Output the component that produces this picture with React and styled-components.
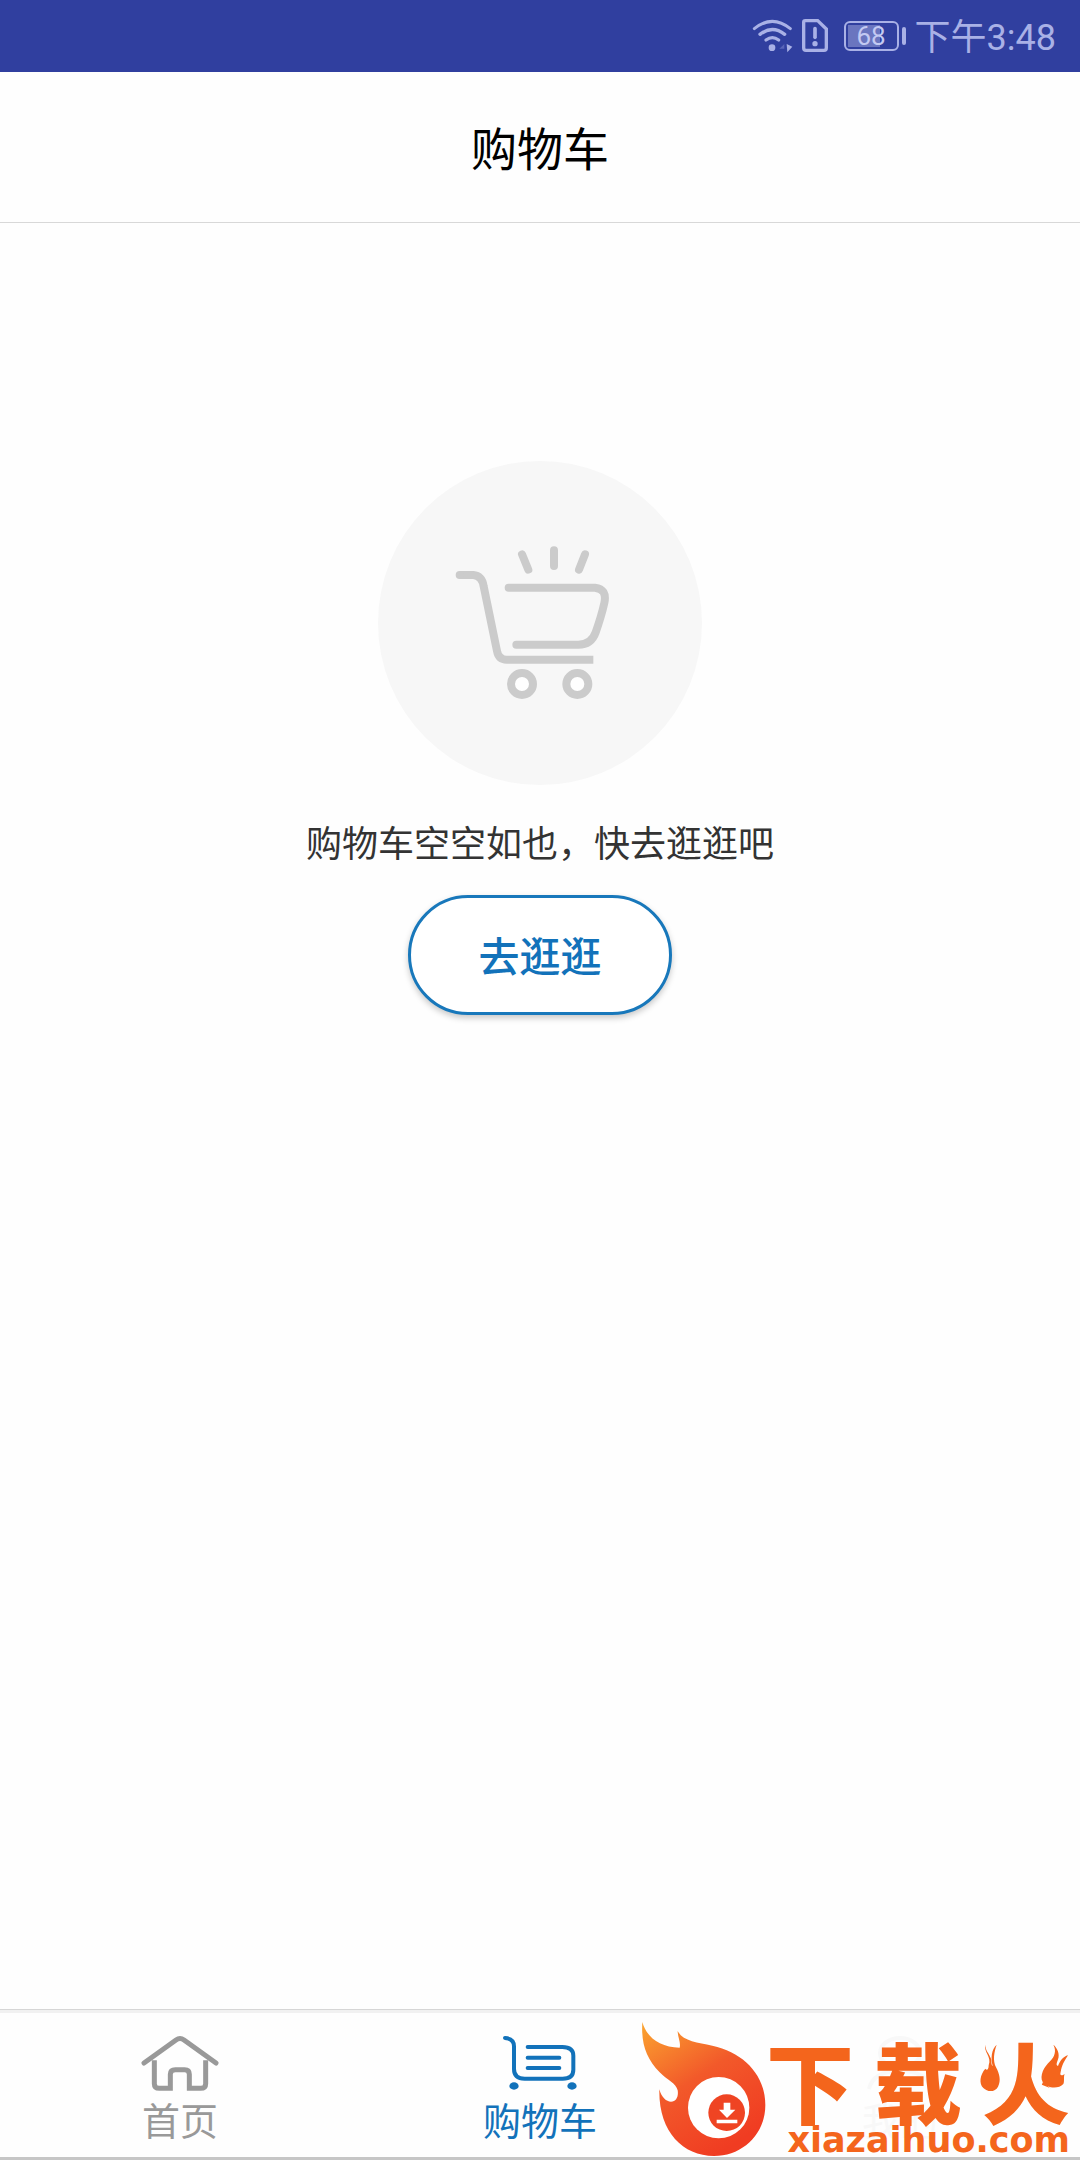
import React, {useState} from "react";
import styled, {createGlobalStyle} from "styled-components";

const GlobalStyle = createGlobalStyle`
  * {
    box-sizing: border-box;
  }
  body {
    margin: 0;
    background: #fefefe;
    font-family: Roboto, "Noto Sans CJK SC", sans-serif;
  }
`;

const Screen = styled.div`
  min-height: 100vh;
  display: flex;
  flex-direction: column;
`;

const StatusBar = styled.div`
  height: 72px;
  padding: 0 24px;
  display: flex;
  align-items: center;
  justify-content: flex-end;
  background: #303f9f;
  color: #a9b1e6;
`;

const StatusIcons = styled.svg`
  width: 92px;
  height: 40px;
`;

const Battery = styled.div`
  position: relative;
  width: 55px;
  height: 30px;
  margin-right: 16px;
  border: 2px solid #a9b1e6;
  border-radius: 6px;
  color: #c3c9f2;
  font-size: 26px;
  line-height: 26px;
  text-align: center;
  background: linear-gradient(#6a75bf, #6a75bf) 2px 2px / 32px 22px no-repeat;

  &::after {
    content: "";
    position: absolute;
    top: 4px;
    right: -9px;
    width: 4px;
    height: 18px;
    border-radius: 2px;
    background: #a9b1e6;
  }
`;

const Clock = styled.time`
  padding-top: 4px;
  font-size: 36px;
  line-height: 48px;
`;

const Header = styled.header`
  height: 151px;
  padding-top: 6px;
  display: flex;
  align-items: center;
  justify-content: center;
  border-bottom: 1px solid #d8d8d8;
`;

const Title = styled.h1`
  margin: 0;
  font-size: 46px;
  line-height: 60px;
  font-weight: 400;
  color: #000;
`;

const Content = styled.main`
  flex: 1;
  display: flex;
  flex-direction: column;
  align-items: center;
  padding-top: 238px;
`;

const EmptyCart = styled.svg`
  width: 324px;
  height: 324px;
`;

const Message = styled.p`
  margin: 36px 0 26px;
  font-size: 36px;
  line-height: 48px;
  color: #333;
`;

const BrowseButton = styled.button`
  min-width: 264px;
  height: 120px;
  padding: 6px 66px 0;
  border: 3px solid #1878bb;
  border-radius: 60px;
  background: #fff;
  box-shadow: 0 3px 6px rgba(0, 0, 0, 0.22);
  font-family: inherit;
  font-size: 41px;
  line-height: 56px;
  font-weight: 500;
  color: #1272ba;
  cursor: pointer;
`;

const BottomBar = styled.nav`
  position: relative;
  display: grid;
  grid-template-columns: repeat(3, 1fr);
  margin-top: 24px;
  border-top: 1px solid #d6d6d6;
  border-bottom: 3px solid #c6c6c6;
  background: #fefefe;
  box-shadow: inset 0 3px 0 #f1f1f1;
`;

const Tab = styled.button`
  display: flex;
  flex-direction: column;
  align-items: center;
  gap: 10px;
  padding: 25px 0 15px;
  border: 0;
  background: none;
  color: ${({$active, $faded}) => ($faded ? "#f8f8f8" : $active ? "#1272ba" : "#999")};
  font-family: inherit;
  font-size: 38px;
  line-height: 40px;
  cursor: pointer;
`;

const TabIcon = styled.svg`
  width: 78px;
  height: 57px;
  fill: none;
  stroke: currentColor;
`;

// sits over the last tab
const Brand = styled.a`
  position: absolute;
  right: 10px;
  bottom: 0;
  display: flex;
  align-items: flex-end;
  color: #f4651c;
  text-decoration: none;
`;

const BrandFlame = styled.svg`
  width: 125px;
  height: 136px;
`;

const BrandText = styled.span`
  display: flex;
  flex-direction: column;
  align-items: flex-end;
`;

const BrandName = styled.span`
  display: flex;
  gap: 20px;
  font-family: "Noto Sans CJK SC", sans-serif;
  font-size: 88px;
  line-height: 88px;
  font-weight: 900;
`;

const BrandSite = styled.span`
  font-family: "DejaVu Sans", sans-serif;
  font-size: 35px;
  line-height: 34px;
  font-weight: 700;
`;

const FireGlyph = styled.span`
  position: relative;
`;

const FireSparks = styled.svg`
  position: absolute;
  inset: 0;
  width: 100%;
  height: 100%;
  overflow: visible;
`;

const HomeIcon = () => (
  <TabIcon viewBox="425 134 234 171" strokeWidth="15" aria-hidden="true">
    <path d="M434 218 L530 149 Q542 140 554 149 L650 218" strokeLinecap="round" />
    <path d="M465 210 V280 Q465 294 480 294 H513 V252 Q513 238 528 238 H556 Q570 238 570 252 V294 H604 Q619 294 619 280 V210" />
  </TabIcon>
);

const CartIcon = () => (
  <TabIcon viewBox="421 134 234 171" strokeWidth="12" strokeLinecap="round" aria-hidden="true">
    <path d="M433 143 Q460 145 460 168 V236 Q460 265 492 265 H606 Q638 265 638 238 V196 Q638 170 605 170 H501" />
    <path d="M501 202 H596 M501 233 H596" />
    <ellipse cx="460" cy="287" rx="14" ry="11" fill="currentColor" stroke="none" />
    <ellipse cx="634" cy="287" rx="14" ry="11" fill="currentColor" stroke="none" />
  </TabIcon>
);

const UserIcon = () => (
  <TabIcon viewBox="0 0 78 57" strokeWidth="4" aria-hidden="true">
    <ellipse cx="39" cy="18" rx="20" ry="15" />
    <path d="M8 54 Q12 36 39 36 Q66 36 70 54" />
  </TabIcon>
);

const TABS = [
  {id: "home", label: "首页", icon: <HomeIcon />},
  {id: "cart", label: "购物车", icon: <CartIcon />},
  {id: "mine", label: "我的", icon: <UserIcon />, faded: true},
];

const App = () => {
  const [active, setActive] = useState("cart");

  return (
    <Screen>
      <GlobalStyle />
      <StatusBar>
        <StatusIcons viewBox="36 48 276 120" fill="none" stroke="currentColor" strokeLinecap="round" aria-hidden="true">
          <path d="M43 86 Q97 42 151 86" strokeWidth="9" />
          <path d="M60 103 Q97 74 134 103" strokeWidth="10" />
          <path d="M78 120 Q97 106 116 120" strokeWidth="10" />
          <circle cx="96" cy="143" r="10" fill="currentColor" stroke="none" />
          <path d="M133 132 L118 146 H133 Z" fill="#5965b8" stroke="none" />
          <path d="M140 132 L157 140 L142 157 Z" fill="currentColor" stroke="none" />
          <path d="M196 62 H233 L259 87 V144 Q259 151 252 151 H198 Q191 151 191 144 V67 Q191 62 196 62 Z" strokeWidth="10" />
          <path d="M225 86 V112" strokeWidth="11" />
          <circle cx="225" cy="131" r="8" fill="currentColor" stroke="none" />
        </StatusIcons>
        <Battery>68</Battery>
        <Clock>下午3:48</Clock>
      </StatusBar>

      <Header>
        <Title>购物车</Title>
      </Header>

      <Content>
        <EmptyCart viewBox="54 64 972 972" fill="none" stroke="#cbcbcb" strokeWidth="24" aria-hidden="true">
          <circle cx="540" cy="550" r="486" fill="#f7f7f7" stroke="none" />
          <path d="M299 406 H340 Q366 408 371 440 L411 634 Q416 660 440 660 H700" />
          <circle cx="299" cy="406" r="12" fill="#cbcbcb" stroke="none" />
          <path d="M446 444 H705 Q742 448 733 490 Q724 530 707 578 Q694 615 655 615 H469" strokeLinecap="round" />
          <path d="M486 344 L505 390 M582 332 V379 M675 344 L657 390" strokeLinecap="round" />
          <circle cx="486" cy="733" r="33" fill="#fefefe" />
          <circle cx="652" cy="733" r="33" fill="#fefefe" />
        </EmptyCart>
        <Message>购物车空空如也，快去逛逛吧</Message>
        <BrowseButton type="button" onClick={() => setActive("home")}>去逛逛</BrowseButton>
      </Content>

      <BottomBar>
        {TABS.map((tab) => (
          <Tab
            key={tab.id}
            type="button"
            $active={tab.id === active}
            $faded={tab.faded}
            onClick={() => setActive(tab.id)}
          >
            {tab.icon}
            {tab.label}
          </Tab>
        ))}
        <Brand href="#">
          <BrandFlame viewBox="36 60 375 408" aria-hidden="true">
            <defs>
              <linearGradient id="flame" x1="0" y1="0" x2="0.6" y2="1">
                <stop offset="0" stopColor="#fba52f" />
                <stop offset="0.5" stopColor="#f2592a" />
                <stop offset="1" stopColor="#f03c22" />
              </linearGradient>
            </defs>
            <path
              fill="url(#flame)"
              d="M40 63 C52 108 92 139 152 140 C156 125 146 108 146 90 C162 121 205 124 250 134 C345 155 409 222 409 312 C409 400 340 465 255 465 C160 465 88 390 91 265 C98 290 112 302 126 302 C142 302 149 286 146 268 C140 246 118 240 92 214 C52 172 36 130 40 63 Z"
            />
            <circle cx="269" cy="320" r="92" fill="#fff" />
            <circle cx="293" cy="335" r="55" fill="#ef4423" />
            <path fill="#fff" d="M284 305 H304 V326 H319 L294 351 L270 326 H284 Z M263 356 H325 V367 H263 Z" />
          </BrandFlame>
          <BrandText>
            <BrandName>
              <span>下</span>
              <span>载</span>
              <FireGlyph>
                火
                <FireSparks viewBox="66 15 264 264" aria-hidden="true">
                  <path fill="#fefefe" d="M60 60 H158 V146 L122 184 H60 Z M240 60 H336 V184 H280 L240 148 Z" />
                  <g fill="currentColor">
                    <path d="M76 44 C70 66 96 80 86 106 C86 120 80 122 76 116 C60 134 56 160 70 174 C84 188 106 186 114 170 C124 152 118 130 108 112 C98 92 102 66 110 44 C94 60 92 82 98 108 C92 104 96 92 92 84 C86 68 76 62 76 44 Z" />
                    <path d="M280 44 C290 62 284 80 270 94 C252 110 238 138 248 156 C260 176 296 178 310 162 C314 154 310 140 314 132 C306 138 298 138 302 126 C306 106 312 94 324 76 C310 80 300 92 294 108 C286 106 292 96 294 88 C300 72 292 54 280 44 Z" />
                  </g>
                </FireSparks>
              </FireGlyph>
            </BrandName>
            <BrandSite>xiazaihuo.com</BrandSite>
          </BrandText>
        </Brand>
      </BottomBar>
    </Screen>
  );
};

export default App;
